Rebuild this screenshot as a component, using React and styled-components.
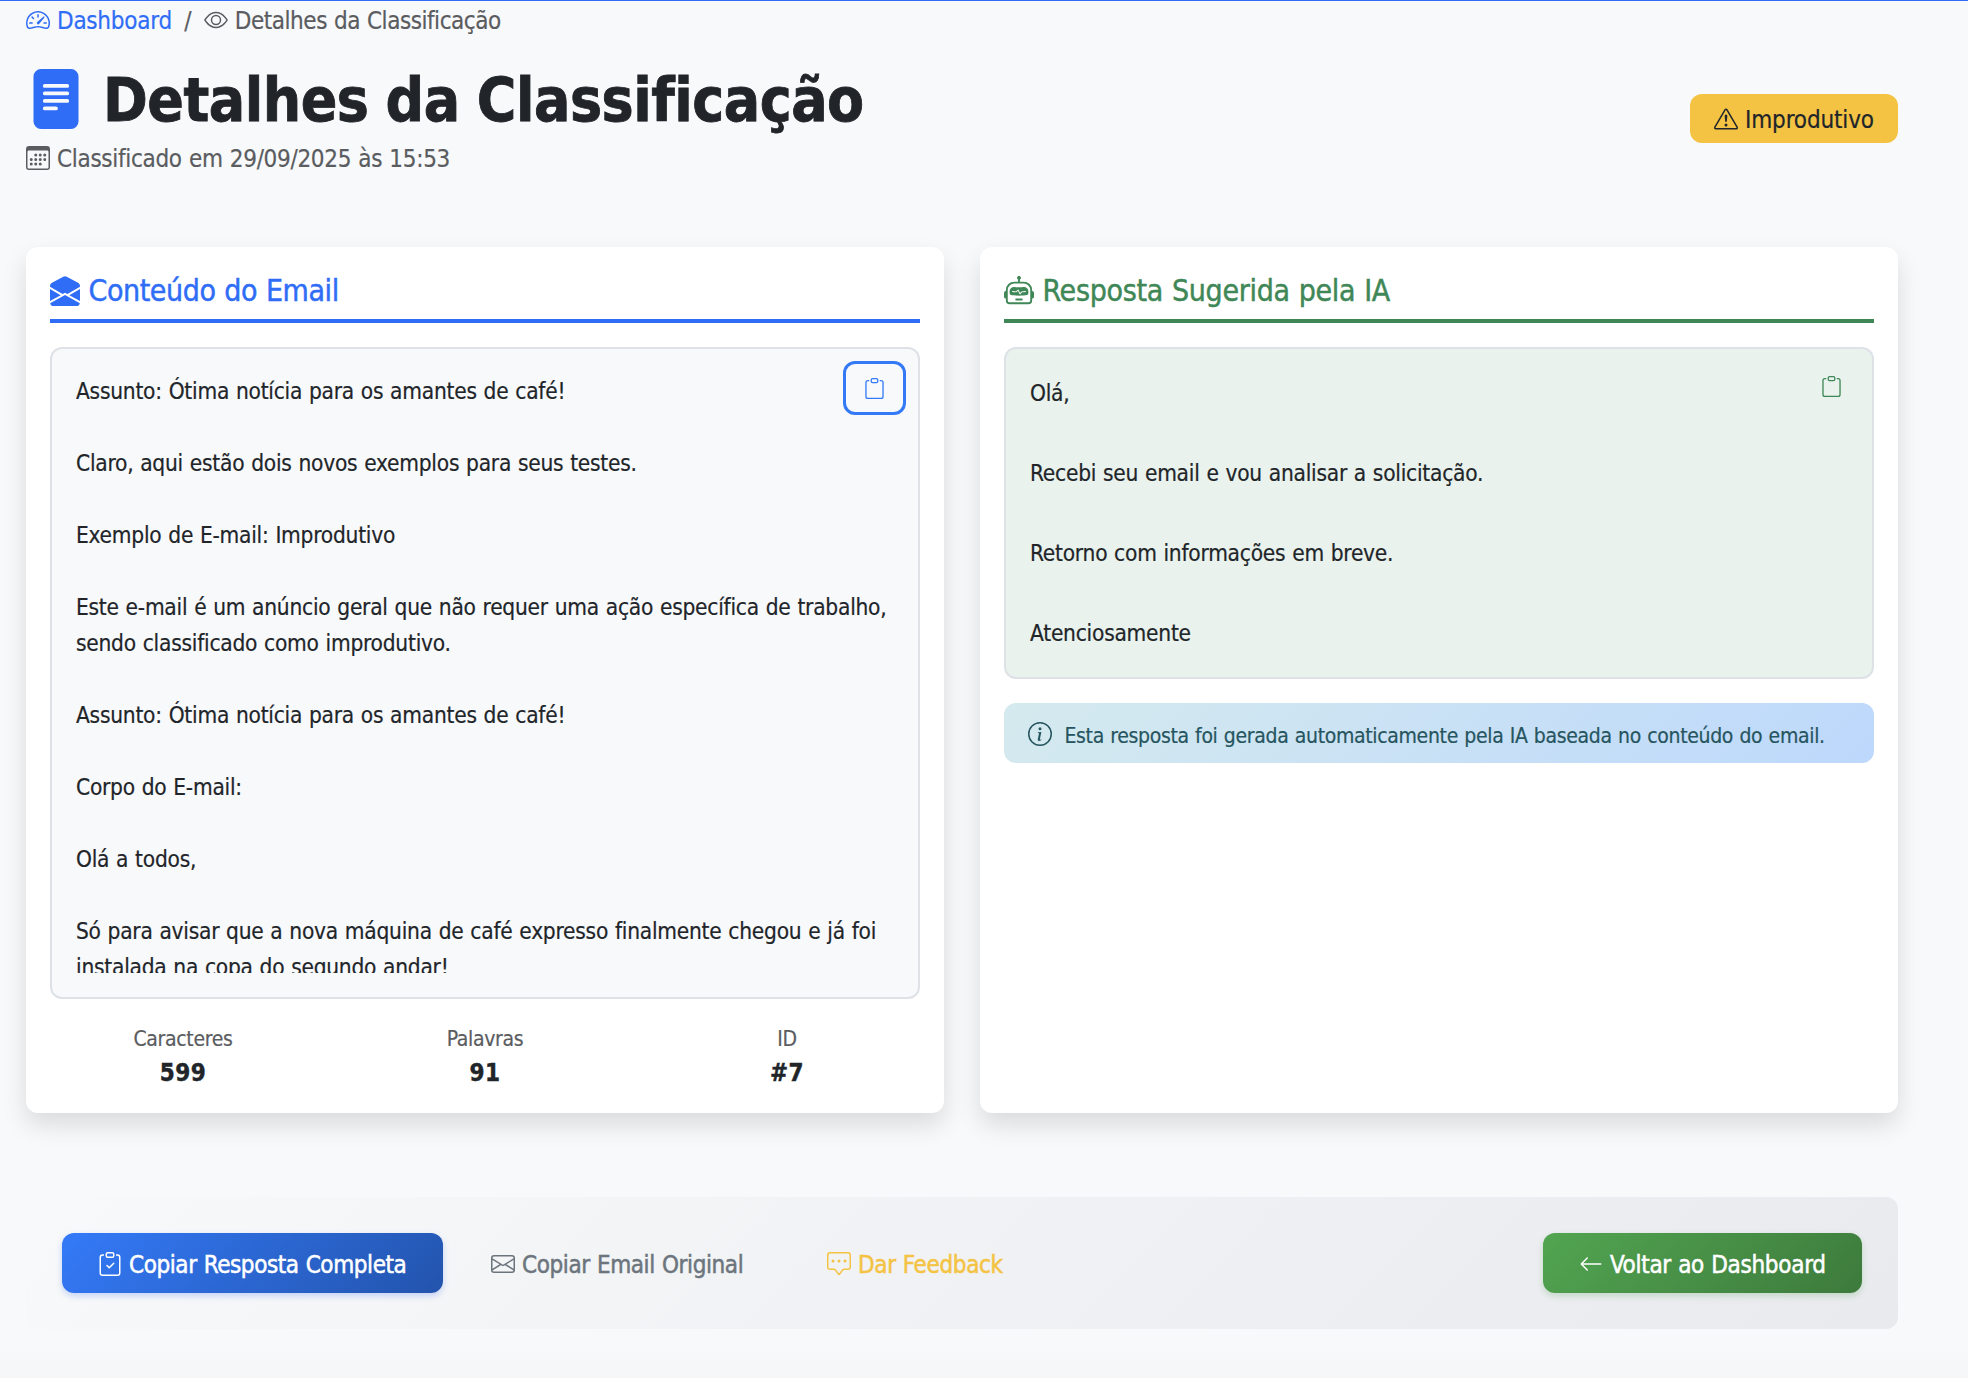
import React from 'react';
import styled, { createGlobalStyle } from 'styled-components';
import {
  BsSpeedometer2,
  BsEye,
  BsFileTextFill,
  BsCalendar3,
  BsExclamationTriangle,
  BsEnvelopeOpenFill,
  BsRobot,
  BsClipboard,
  BsClipboardCheck,
  BsEnvelope,
  BsChatSquareDots,
  BsArrowLeft,
  BsInfoCircle,
} from 'react-icons/bs';

const GlobalStyle = createGlobalStyle`
  *, *::before, *::after { box-sizing: border-box; }
  body {
    margin: 0;
    background: #f8f9fb;
    color: #212529;
    font-family: Tahoma, "DejaVu Sans Condensed", "Noto Sans", sans-serif;
    font-size: 24px;
    line-height: 36px;
    word-spacing: 0.027em;
    -webkit-text-stroke: 0.2px currentColor;
  }
`;

const Page = styled.div`
  height: 1378px;
  overflow: hidden;
  border-top: 1px solid #2f6df6;
  padding: 2px 70px 0 26px;
  background: linear-gradient(to bottom, rgba(245, 246, 248, 0) calc(100% - 36px), #f5f6f8 100%);
`;

const Label = styled.span`
  letter-spacing: ${(p) => p.$track || 0}px;
  white-space: nowrap;
`;

const Breadcrumb = styled.nav`
  display: flex;
  align-items: center;
  color: #5a5c5f;

  svg { margin-top: -2px; flex: none; }
`;

const Crumb = styled.span`
  display: flex;
  align-items: center;
  gap: 7px;
  color: ${(p) => (p.$active ? '#5a5c5f' : '#2f6df6')};
`;

const Divider = styled.span`
  width: 32px;
  text-align: center;
`;

const Header = styled.header`
  display: flex;
  justify-content: space-between;
  align-items: center;
  margin-top: 25px;
`;

const Title = styled.h1`
  display: flex;
  align-items: center;
  gap: 17px;
  margin: 0;
  font-size: 60px;
  line-height: 72px;
  font-weight: 700;
  word-spacing: -1.2px;
  -webkit-text-stroke: 0.8px currentColor;

  svg { color: #2f6df6; margin-top: -2px; }
`;

const Subtitle = styled.p`
  display: flex;
  align-items: center;
  gap: 7px;
  margin: 5px 0 0;
  color: #5a5c5f;

  svg { margin-top: -2px; }
`;

const Badge = styled.span`
  display: flex;
  align-items: center;
  gap: 7px;
  width: 208px;
  height: 49px;
  margin-top: -4px;
  padding: 3px 0 0 24px;
  border-radius: 12px;
  background: #f4c344;

  svg { margin-top: -2px; }
`;

const Cards = styled.main`
  display: grid;
  grid-template-columns: 1fr 1fr;
  grid-template-rows: 866px;
  gap: 36px;
  margin-top: 70px;
`;

const Card = styled.section`
  padding: 24px 24px 0;
  border-radius: 12px;
  background: #fff;
  box-shadow: 0 12px 24px rgba(0, 0, 0, 0.12);
`;

const CardTitle = styled.h2`
  display: flex;
  align-items: center;
  gap: 8.5px;
  margin: 0 0 24px;
  padding-bottom: 9px;
  border-bottom: 4px solid ${(p) => p.$color};
  color: ${(p) => p.$color};
  font-size: 30px;
  line-height: 39px;
  font-weight: 400;
  -webkit-text-stroke: 0.45px currentColor;
`;

const TextBox = styled.div`
  position: relative;
  padding: 24px;
  border: 2px solid #dee2e6;
  border-radius: 12px;
  background: ${(p) => p.$bg};
`;

const Message = styled.div`
  max-height: 600px;
  overflow: hidden;
  white-space: pre-wrap;
  font-size: 22.5px;
  line-height: ${(p) => p.$leading}px;
  letter-spacing: -0.24px;
`;

const CopyButton = styled.button`
  position: absolute;
  top: 12px;
  right: 12px;
  display: flex;
  align-items: center;
  justify-content: center;
  width: ${(p) => (p.$focused ? 63 : 57)}px;
  height: ${(p) => (p.$focused ? 54 : 51)}px;
  padding: 0;
  border: ${(p) => (p.$focused ? '3px solid #347af6' : '0')};
  border-radius: 12px;
  background: transparent;
  color: ${(p) => p.$color};
`;

const Stats = styled.div`
  display: grid;
  grid-template-columns: repeat(3, 1fr);
  margin: 24px -18px 0;
  text-align: center;
`;

const StatLabel = styled.div`
  padding-top: 1px;
  color: #5a5c5f;
  font-size: 21px;
  line-height: 31px;
  letter-spacing: -0.32px;
`;

const StatValue = styled.div`
  font-weight: 700;
  letter-spacing: 0.5px;
  -webkit-text-stroke: 0.4px currentColor;
`;

const Notice = styled.div`
  display: flex;
  align-items: center;
  gap: 12.5px;
  height: 60px;
  margin-top: 24px;
  padding: 2px 24px 0;
  border-radius: 12px;
  background: linear-gradient(135deg, #d5eaee 0%, #bdd8fc 100%);
  color: #26555f;
  font-size: 21px;
`;

const NoticeText = styled.span`
  padding-top: 3px;
  letter-spacing: -0.33px;
  white-space: nowrap;
`;

const Footer = styled.footer`
  display: flex;
  align-items: center;
  gap: 12px;
  height: 132px;
  margin-top: 84px;
  padding: 0 36px;
  border-radius: 12px;
  background: linear-gradient(135deg, #f8f9fa 0%, #e9eaee 100%);
`;

const variants = {
  primary: `
    color: #fff;
    background: linear-gradient(135deg, #347af8 0%, #2354ad 100%);
    box-shadow: 0 3px 6px rgba(47, 109, 245, 0.25);
  `,
  success: `
    color: #fff;
    margin-left: auto;
    background: linear-gradient(135deg, #52a551 0%, #3d7a3c 100%);
    box-shadow: 0 3px 6px rgba(76, 160, 80, 0.25);
  `,
  secondary: 'color: #6c757d; background: transparent;',
  warning: 'color: #f4c344; background: transparent;',
};

const Button = styled.button`
  display: flex;
  align-items: center;
  gap: 7px;
  width: ${(p) => p.$width}px;
  height: 60px;
  padding: 3px 0 0 36px;
  border: 0;
  border-radius: 12px;
  font: inherit;
  font-weight: 400;
  word-spacing: inherit;
  -webkit-text-stroke: 0.5px currentColor;
  ${(p) => variants[p.$variant]}

  svg { margin-top: -2px; flex: none; }
`;

const email = `Assunto: Ótima notícia para os amantes de café!

Claro, aqui estão dois novos exemplos para seus testes.

Exemplo de E-mail: Improdutivo

Este e-mail é um anúncio geral que não requer uma ação específica de trabalho, sendo classificado como improdutivo.

Assunto: Ótima notícia para os amantes de café!

Corpo do E-mail:

Olá a todos,

Só para avisar que a nova máquina de café expresso finalmente chegou e já foi instalada na copa do segundo andar!`;

const reply = `Olá,

Recebi seu email e vou analisar a solicitação.

Retorno com informações em breve.

Atenciosamente`;

const stats = [
  ['Caracteres', '599'],
  ['Palavras', '91'],
  ['ID', '#7'],
];

export default function App() {
  return (
    <>
      <GlobalStyle />
      <Page>
        <Breadcrumb>
          <Crumb>
            <BsSpeedometer2 />
            <Label $track={-0.25}>Dashboard</Label>
          </Crumb>
          <Divider>/</Divider>
          <Crumb $active>
            <BsEye />
            <Label $track={-0.47}>Detalhes da Classificação</Label>
          </Crumb>
        </Breadcrumb>

        <Header>
          <div>
            <Title>
              <BsFileTextFill />
              <Label $track={-0.48}>Detalhes da Classificação</Label>
            </Title>
            <Subtitle>
              <BsCalendar3 />
              <Label $track={-0.31}>Classificado em 29/09/2025 às 15:53</Label>
            </Subtitle>
          </div>
          <Badge>
            <BsExclamationTriangle />
            <Label $track={-0.15}>Improdutivo</Label>
          </Badge>
        </Header>

        <Cards>
          <Card>
            <CardTitle $color="#2f6df6">
              <BsEnvelopeOpenFill />
              <Label $track={-0.42}>Conteúdo do Email</Label>
            </CardTitle>
            <TextBox $bg="#f8f9fb">
              <Message $leading={36}>{email}</Message>
              <CopyButton $focused $color="#347af6" aria-label="Copiar">
                <BsClipboard size={21} />
              </CopyButton>
            </TextBox>
            <Stats>
              {stats.map(([label, value]) => (
                <div key={label}>
                  <StatLabel>{label}</StatLabel>
                  <StatValue>{value}</StatValue>
                </div>
              ))}
            </Stats>
          </Card>

          <Card>
            <CardTitle $color="#3f8757">
              <BsRobot />
              <Label $track={-0.3}>Resposta Sugerida pela IA</Label>
            </CardTitle>
            <TextBox $bg="#e9f2ec">
              <Message $leading={40}>{reply}</Message>
              <CopyButton $color="#3f8757" aria-label="Copiar">
                <BsClipboard size={21} />
              </CopyButton>
            </TextBox>
            <Notice>
              <BsInfoCircle size={24} />
              <NoticeText>
                Esta resposta foi gerada automaticamente pela IA baseada no conteúdo do email.
              </NoticeText>
            </Notice>
          </Card>
        </Cards>

        <Footer>
          <Button $variant="primary" $width={381}>
            <BsClipboardCheck />
            <Label $track={-0.42}>Copiar Resposta Completa</Label>
          </Button>
          <Button $variant="secondary" $width={324}>
            <BsEnvelope />
            <Label $track={-0.39}>Copiar Email Original</Label>
          </Button>
          <Button $variant="warning" $width={250}>
            <BsChatSquareDots />
            <Label $track={-0.35}>Dar Feedback</Label>
          </Button>
          <Button $variant="success" $width={319}>
            <BsArrowLeft />
            <Label $track={-0.29}>Voltar ao Dashboard</Label>
          </Button>
        </Footer>
      </Page>
    </>
  );
}
